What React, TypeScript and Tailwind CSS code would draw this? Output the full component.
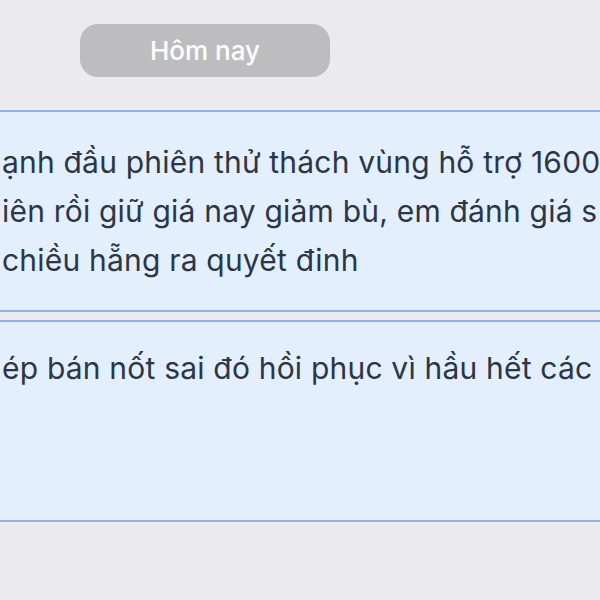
import React from "react";

const font = { fontFamily: "Inter, 'Noto Sans', sans-serif" };

const firstCard = [
  "ạnh đầu phiên thử thách vùng hỗ trợ 1600",
  "iên rồi giữ giá nay giảm bù, em đánh giá s",
  "chiều hẵng ra quyết đinh",
];

const secondCard = ["ép bán nốt sai đó hồi phục vì hầu hết các"];

const Card = ({ lines, top }: { lines: string[]; top: string }) => (
  <div className={`h-[202px] w-full overflow-hidden border-y-2 border-[#8db3ea] bg-[#e3effd] pl-[2px] text-[#2c3646] ${top}`}>
    {lines.map((line) => (
      <div key={line} className="whitespace-nowrap text-[30px] tracking-[0.2px] leading-[49px]">
        {line}
      </div>
    ))}
  </div>
);

export default function App() {
  return (
    <div className="flex h-[600px] w-[600px] flex-col overflow-hidden bg-[#ebebed]" style={font}>
      <div className="pl-[80px] pt-[24px]">
        <div className="flex h-[53px] w-[250px] items-center justify-center rounded-[18px] bg-[#bdbdbf] text-[26px] font-medium text-white">
          Hôm nay
        </div>
      </div>
      <div className="mt-[33px] flex flex-col gap-[8px]">
        <Card lines={firstCard} top="pt-[26px]" />
        <Card lines={secondCard} top="pt-[22px]" />
      </div>
    </div>
  );
}
